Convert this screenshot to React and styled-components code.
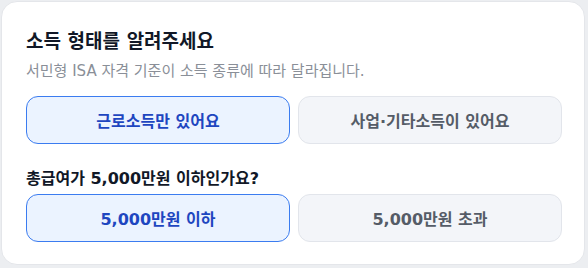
import React, { useState } from 'react';
import styled, { createGlobalStyle } from 'styled-components';

const GlobalStyle = createGlobalStyle`
    html, body {
        margin: 0;
        padding: 0;
        background: #eceef1;
    }

    body {
        font-family: "DejaVu Sans", "Noto Sans CJK KR", sans-serif;
    }
`;

const Page = styled.div`
    padding: 1px;
`;

const Card = styled.section`
    // layout
    width: 584px;
    height: 264px;
    box-sizing: border-box;
    padding: 25px 22px 23px 24px;
    display: flex;
    flex-direction: column;

    // color
    background: white;
    border: 1px solid #e4e6ea;
    border-radius: 16px;
`;

const Title = styled.h2`
    margin: 0;
    font-size: 19px;
    line-height: 28px;
    font-weight: 700;
    color: #111827;
`;

const Subtitle = styled.p`
    margin: 6px 0 0;
    font-size: 15px;
    line-height: 20px;
    color: #8a8f98;
`;

const Question = styled.h3`
    margin: 23px 0 4px;
    font-size: 16px;
    line-height: 23px;
    font-weight: 700;
    color: #111827;
`;

const Options = styled.div`
    display: grid;
    grid-template-columns: 1fr 1fr;
    gap: 8px;
    margin-top: ${props => props.$top || 0}px;
`;

const Option = styled.button`
    // layout
    height: 48px;
    padding: 0;
    display: flex;
    align-items: center;
    justify-content: center;

    // color
    background: ${props => props.$active ? '#ebf3ff' : '#f3f5f9'};
    border: 1px solid ${props => props.$active ? '#3b7cf0' : '#e2e5eb'};
    color: ${props => props.$active ? '#1e46c0' : '#555c67'};

    // etc
    border-radius: 12px;
    font-family: inherit;
    font-size: 16px;
    font-weight: 700;
    cursor: pointer;
`;

const incomeTypes = ['근로소득만 있어요', '사업·기타소득이 있어요'];
const salaryRanges = ['5,000만원 이하', '5,000만원 초과'];

function App() {
    const [income, setIncome] = useState(0);
    const [salary, setSalary] = useState(0);

    return (
        <Page>
            <GlobalStyle />
            <Card>
                <Title>소득 형태를 알려주세요</Title>
                <Subtitle>서민형 ISA 자격 기준이 소득 종류에 따라 달라집니다.</Subtitle>
                <Options $top={15}>
                    {incomeTypes.map((label, i) => (
                        <Option key={label} $active={income === i} onClick={() => setIncome(i)}>
                            {label}
                        </Option>
                    ))}
                </Options>
                <Question>총급여가 5,000만원 이하인가요?</Question>
                <Options>
                    {salaryRanges.map((label, i) => (
                        <Option key={label} $active={salary === i} onClick={() => setSalary(i)}>
                            {label}
                        </Option>
                    ))}
                </Options>
            </Card>
        </Page>
    );
}

export default App;
